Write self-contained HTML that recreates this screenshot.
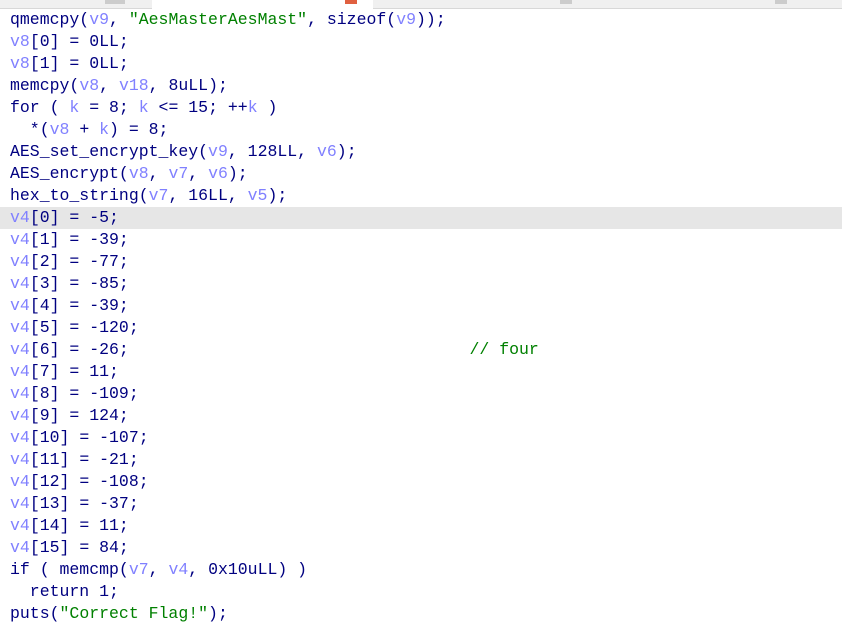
<!DOCTYPE html>
<html><head><style>
body{margin:0;width:842px;height:626px;background:#fff;overflow:hidden;position:relative}
.bar{position:absolute;top:0;left:0;width:842px;height:8px;background:#f0f0f0;border-bottom:1px solid #d8d8d8}
.tab{position:absolute;top:0;height:8px}
pre{position:absolute;left:10px;top:9px;margin:0;font-family:"Liberation Mono",monospace;font-size:16.5px;line-height:22px;color:#000080}
.v{color:#8080ff}.s{color:#008000}.c{color:#008000;margin-left:4px}
.hl{position:absolute;left:0;top:207px;width:842px;height:22px;background:#e6e6e6}
</style></head><body>
<div class="bar"></div>
<div class="tab" style="left:152px;width:221px;background:#fff;height:9px"></div>
<div class="tab" style="left:105px;top:0;width:20px;height:4px;background:#ccc"></div>
<div class="tab" style="left:345px;top:0;width:12px;height:4px;background:#e06040"></div>
<div class="tab" style="left:560px;top:0;width:12px;height:4px;background:#ccc"></div>
<div class="tab" style="left:775px;top:0;width:12px;height:4px;background:#ccc"></div>
<div class="hl"></div>
<pre>qmemcpy(<span class="v">v9</span>, <span class="s">"AesMasterAesMast"</span>, sizeof(<span class="v">v9</span>));
<span class="v">v8</span>[0] = 0LL;
<span class="v">v8</span>[1] = 0LL;
memcpy(<span class="v">v8</span>, <span class="v">v18</span>, 8uLL);
for ( <span class="v">k</span> = 8; <span class="v">k</span> &lt;= 15; ++<span class="v">k</span> )
  *(<span class="v">v8</span> + <span class="v">k</span>) = 8;
AES_set_encrypt_key(<span class="v">v9</span>, 128LL, <span class="v">v6</span>);
AES_encrypt(<span class="v">v8</span>, <span class="v">v7</span>, <span class="v">v6</span>);
hex_to_string(<span class="v">v7</span>, 16LL, <span class="v">v5</span>);
<span class="v">v4</span>[0] = -5;
<span class="v">v4</span>[1] = -39;
<span class="v">v4</span>[2] = -77;
<span class="v">v4</span>[3] = -85;
<span class="v">v4</span>[4] = -39;
<span class="v">v4</span>[5] = -120;
<span class="v">v4</span>[6] = -26;                                  <span class="c">// four</span>
<span class="v">v4</span>[7] = 11;
<span class="v">v4</span>[8] = -109;
<span class="v">v4</span>[9] = 124;
<span class="v">v4</span>[10] = -107;
<span class="v">v4</span>[11] = -21;
<span class="v">v4</span>[12] = -108;
<span class="v">v4</span>[13] = -37;
<span class="v">v4</span>[14] = 11;
<span class="v">v4</span>[15] = 84;
if ( memcmp(<span class="v">v7</span>, <span class="v">v4</span>, 0x10uLL) )
  return 1;
puts(<span class="s">"Correct Flag!"</span>);</pre>
</body></html>
